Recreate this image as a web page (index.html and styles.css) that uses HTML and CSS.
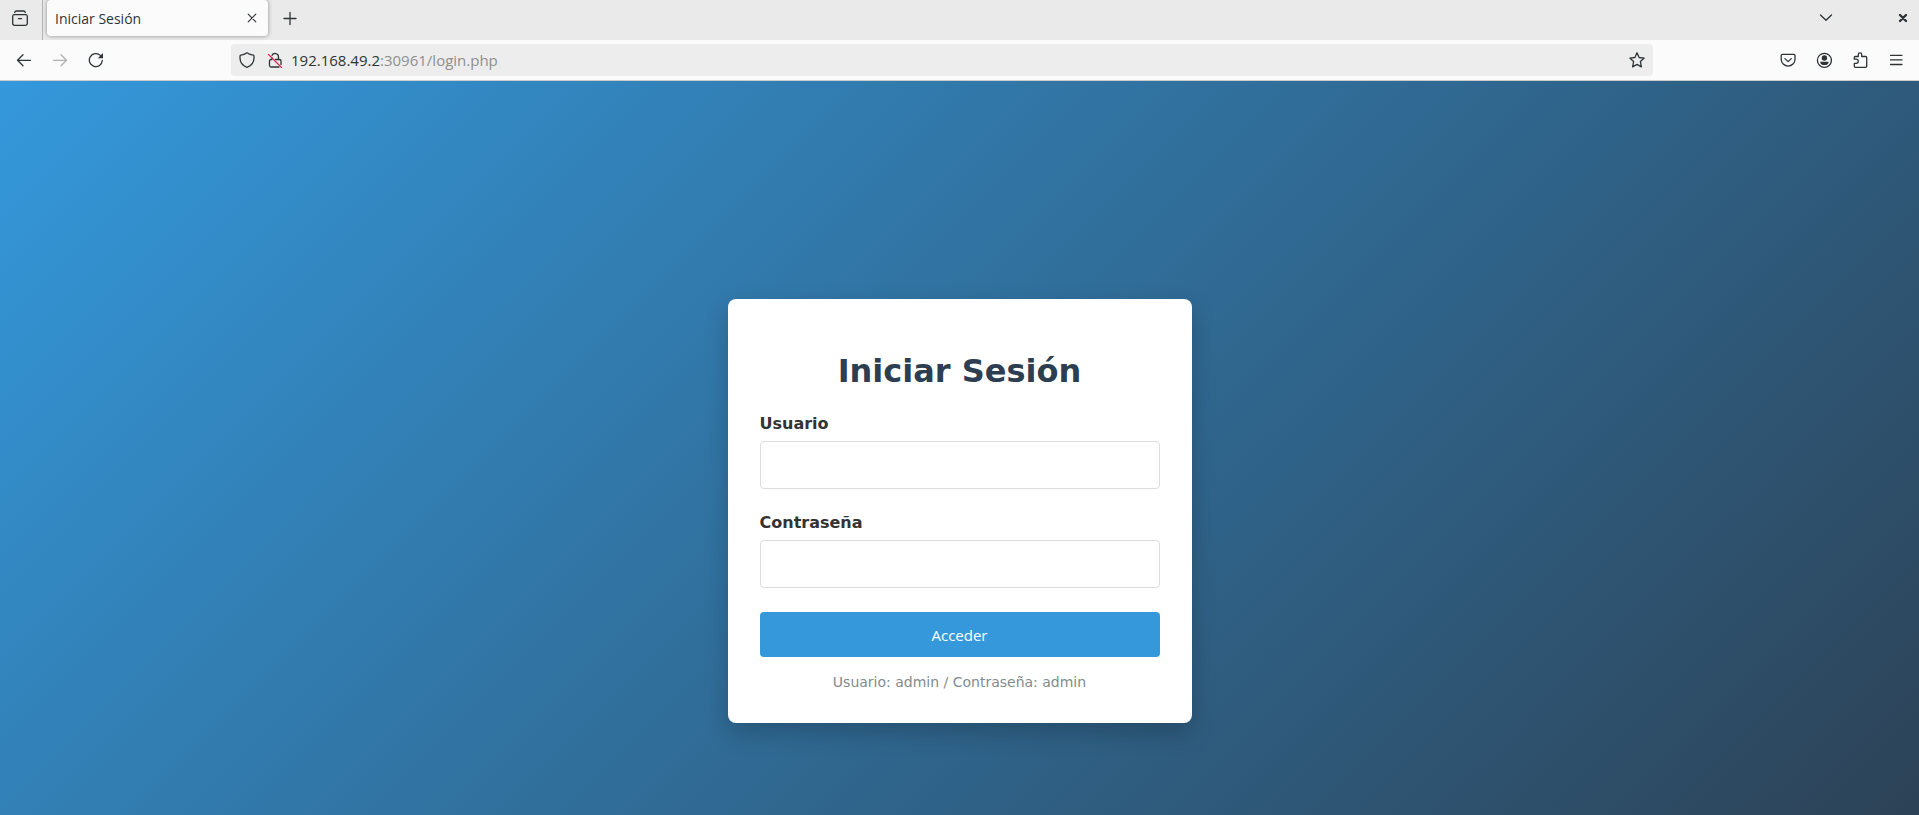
FILE: index.html
```html
<!DOCTYPE html>
<html lang="es">
<head>
<meta charset="utf-8">
<title>Iniciar Sesión</title>
<link rel="stylesheet" href="styles.css">
</head>
<body>
<header class="browser">
  <div class="tabbar">
    <div class="view-slot">
      <button class="icon-btn" type="button" aria-label="Firefox View">
        <svg class="icon" viewBox="0 0 16 16"><path d="M2.700 2.500q.2-1.500 1.800-1.500h7q1.600 0 1.800 1.500"/><rect x=".7" y="4.700" width="14.600" height="10.600" rx="1.800"/><path d="M6.500 8.700h3"/></svg>
      </button>
    </div>
    <div class="tab">
      <span class="tab-title">Iniciar Sesión</span>
      <button class="icon-btn tab-close" type="button" aria-label="Cerrar pestaña">
        <svg class="icon thin" viewBox="0 0 16 16"><path d="M4.200 4.200l7.600 7.600M11.800 4.200l-7.600 7.600"/></svg>
      </button>
    </div>
    <button class="icon-btn new-tab" type="button" aria-label="Nueva pestaña">
      <svg class="icon" viewBox="0 0 16 16"><path d="M8 2.500v12M2 8.500h12"/></svg>
    </button>
    <div class="window-controls">
      <button class="icon-btn" type="button" aria-label="Lista de pestañas">
        <svg class="icon" viewBox="0 0 16 16"><path d="M2.500 5L8 10.300 13.500 5"/></svg>
      </button>
      <button class="icon-btn" type="button" aria-label="Cerrar ventana">
        <svg class="icon heavy" viewBox="0 0 16 16"><path d="M5 5l6 6M11 5l-6 6"/></svg>
      </button>
    </div>
  </div>
  <div class="toolbar">
    <nav class="history">
      <button class="icon-btn" type="button" aria-label="Atrás">
        <svg class="icon" viewBox="0 0 16 16"><path d="M14.500 8.300h-13M7 2.800L1.500 8.300 7 13.800"/></svg>
      </button>
      <button class="icon-btn" type="button" aria-label="Adelante" disabled>
        <svg class="icon" viewBox="0 0 16 16"><path d="M1.500 8.300h13M9 2.800l5.500 5.500L9 13.800"/></svg>
      </button>
      <button class="icon-btn" type="button" aria-label="Recargar">
        <svg class="icon" viewBox="0 0 16 16"><path d="M14.300 8.500A6.500 6.500 0 1 1 12.300 3.400"/><path class="solid" d="M15 1v5.200H9.800z"/></svg>
      </button>
    </nav>
    <div class="urlbar">
      <button class="icon-btn" type="button" aria-label="Protección">
        <svg class="icon" viewBox="0 0 16 16"><path d="M8 .8q2.800 2 6.200 2.400.8.100.8 1v1.600c0 4.500-2.800 8.100-7 9.600C3.800 13.900 1 10.300 1 5.800V4.200q0-.9.800-1Q5.200 2.800 8 .8z"/></svg>
      </button>
      <button class="icon-btn" type="button" aria-label="Conexión no segura">
        <svg class="icon" viewBox="0 0 16 16"><path d="M5 3.500a3.400 3.400 0 0 1 6.500 1.200V7.500"/><path d="M2.500 9v4.500q0 1.500 1.500 1.500h8M8.500 7.500h4q1.500 0 1.500 1.500v3.500M2.500 9q0-1.500 1.500-1.500h1V6"/><path class="slash" d="M1.500 2.500l13 13"/></svg>
      </button>
      <a class="url" href="#"><span class="host">192.168.49.2</span>:30961/login.php</a>
      <button class="icon-btn" type="button" aria-label="Añadir a marcadores">
        <svg class="icon" viewBox="0 0 16 16"><path d="M8 .8l2.100 4.700 5.100.6-3.800 3.500 1 5.300L8 12.400l-4.400 2.500 1-5.300L.8 6.100l5.100-.6z"/></svg>
      </button>
    </div>
    <div class="actions">
      <button class="icon-btn" type="button" aria-label="Pocket">
        <svg class="icon" viewBox="0 0 16 16"><path d="M2.500 2.300h11.200q1.300 0 1.300 1.300v3.600a6.900 6.900 0 0 1-13.800 0V3.600q0-1.300 1.300-1.300z"/><path d="M4.900 6.600l3.200 3 3.200-3"/></svg>
      </button>
      <button class="icon-btn" type="button" aria-label="Cuenta">
        <svg class="icon" viewBox="0 0 16 16"><circle cx="8.400" cy="8.300" r="7"/><circle class="solid" cx="8.400" cy="6" r="2.700"/><path class="solid" d="M4.200 9.700h8.400q0 3.400-4.200 3.400T4.200 9.700z"/></svg>
      </button>
      <button class="icon-btn" type="button" aria-label="Extensiones">
        <svg class="icon" viewBox="0 0 16 16"><path d="M2.300 7.200V5.500q0-1 1-1h3V2.600a1.700 1.700 0 0 1 3.400 0v1.900h4q1 0 1 1v8.800q0 1-1 1H3.300q-1 0-1-1v-3h1.900a1.900 1.900 0 0 0 0-4.100z"/></svg>
      </button>
      <button class="icon-btn" type="button" aria-label="Menú">
        <svg class="icon" viewBox="0 0 16 16"><path d="M2.500 3.300h11.500M2.500 7.900h11.500M2.500 12.500h11.500"/></svg>
      </button>
    </div>
  </div>
</header>
<main class="page">
  <form class="card">
    <h1 class="title">Iniciar Sesión</h1>
    <div class="field">
      <label for="username">Usuario</label>
      <input id="username" type="text">
    </div>
    <div class="field">
      <label for="password">Contraseña</label>
      <input id="password" type="password">
    </div>
    <button class="submit" type="submit">Acceder</button>
    <p class="hint">Usuario: admin / Contraseña: admin</p>
  </form>
</main>
</body>
</html>
```
FILE: styles.css
```css
* {
  box-sizing: border-box;
}

body {
  display: flex;
  flex-direction: column;
  height: 100vh;
  margin: 0;
  overflow: hidden;
  color: #333;
  font-family: "DejaVu Sans", sans-serif;
  font-size: 16px;
}

button,
input {
  font-family: "Open Sans", "Noto Sans", sans-serif;
  font-size: 15px;
}

/* Browser chrome */
.browser {
  flex: none;
  background: #fbfbfb;
  border-bottom: 1px solid #ccc;
  color: #2e3436;
  font-family: "Open Sans", "Noto Sans", sans-serif;
}

.icon-btn {
  display: flex;
  flex: none;
  padding: 0;
  border: 0;
  background: none;
  color: inherit;
}

.icon-btn:disabled {
  color: #b0b0b0;
}

.icon {
  width: 16px;
  height: 16px;
  fill: none;
  stroke: currentColor;
  stroke-width: 1.3;
  stroke-linecap: round;
  stroke-linejoin: round;
}

.icon.thin {
  stroke-width: 1.1;
}

.icon.heavy {
  stroke-width: 2.4;
}

.icon .solid {
  fill: currentColor;
  stroke: none;
}

.icon .slash {
  stroke: #e8265a;
}

.tabbar {
  display: flex;
  align-items: center;
  height: 40px;
  padding: 0 8px 4px 0;
  background: #eaeaea;
}

.view-slot {
  display: flex;
  align-items: center;
  align-self: flex-start;
  height: 40px;
  padding: 0 14px 4px 12px;
  border-right: 1px solid #b4b4b4;
}

.tab {
  display: flex;
  align-items: center;
  justify-content: space-between;
  width: 221px;
  height: 36px;
  margin: 0 14px 0 4px;
  padding: 0 8px;
  border-radius: 4px;
  background: #fbfbfb;
  box-shadow: 0 0 4px rgba(0, 0, 0, 0.4);
}

.tab-title {
  font-size: 14px;
}

.window-controls {
  display: flex;
  gap: 61px;
  margin-left: auto;
}

.toolbar {
  display: flex;
  align-items: center;
  height: 40px;
  padding: 0 15px 0 16px;
}

.history,
.actions {
  display: flex;
  gap: 20px;
}

.urlbar {
  display: flex;
  flex: 1;
  align-items: center;
  gap: 12px;
  height: 32px;
  margin: 0 127px;
  padding: 0 8px;
  border-radius: 4px;
  background: #ededed;
}

.url {
  flex: 1;
  margin-left: -4px;
  color: #8f8f8f;
  font-size: 15px;
  text-decoration: none;
}

.host {
  color: #2e3436;
}

/* Login page */
.page {
  display: flex;
  flex: none;
  align-items: center;
  justify-content: center;
  min-height: calc(100vh + 45px);
  background: linear-gradient(135deg, #3498db, #2c3e50);
}

.card {
  width: 464px;
  padding: 32px;
  border-radius: 8px;
  background: #fff;
  box-shadow: 0 10px 25px rgba(0, 0, 0, 0.2);
}

.title {
  margin: 21px 0 24px;
  color: #2c3e50;
  font-size: 32px;
  line-height: 38px;
  text-align: center;
}

.field {
  margin-bottom: 24px;
}

.field label {
  display: block;
  margin-bottom: 8px;
  font-weight: bold;
  line-height: 19px;
}

.field input {
  display: block;
  width: 100%;
  height: 48px;
  padding: 12px;
  border: 1px solid #ddd;
  border-radius: 4px;
}

.submit {
  display: block;
  width: 100%;
  height: 45px;
  border: 0;
  border-radius: 4px;
  background: #3498db;
  color: #fff;
}

.hint {
  margin: 17px 0 0;
  color: #7f8c8d;
  font-size: 14px;
  line-height: 17px;
  text-align: center;
}
```
